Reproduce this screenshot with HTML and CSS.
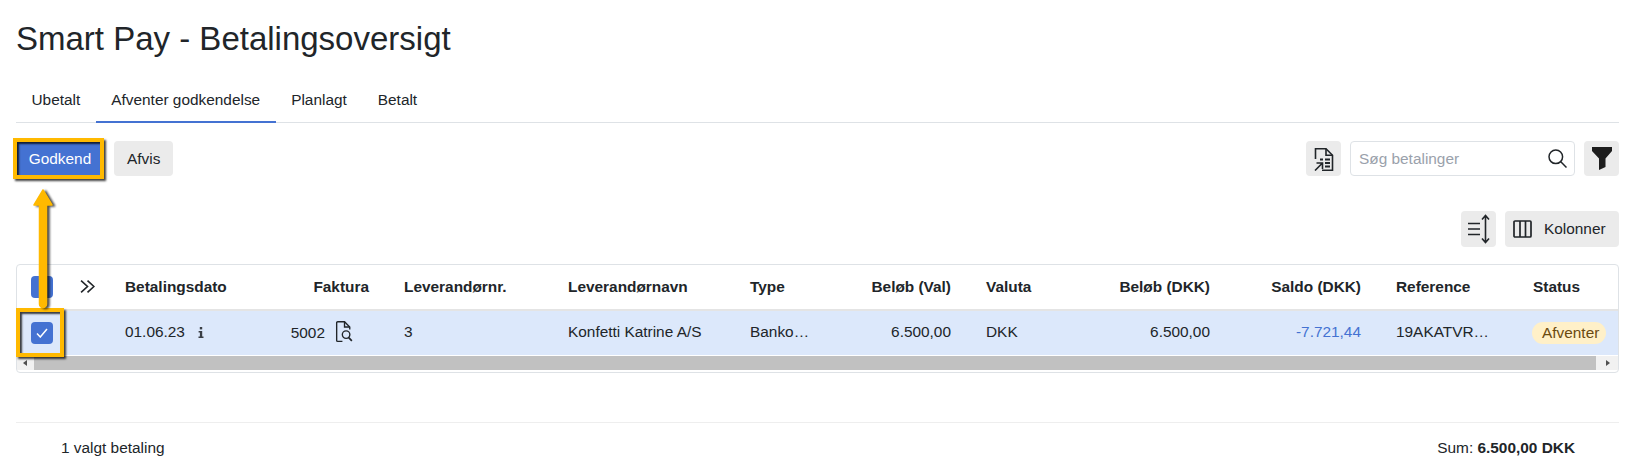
FILE: index.html
```html
<!DOCTYPE html>
<html lang="da">
<head>
<meta charset="utf-8">
<title>Smart Pay - Betalingsoversigt</title>
<link rel="stylesheet" href="styles.css">
</head>
<body>
<main class="page">
  <h1 class="title">Smart Pay - Betalingsoversigt</h1>
  <nav class="tabs">
    <a class="tab">Ubetalt</a>
    <a class="tab active">Afventer godkendelse</a>
    <a class="tab">Planlagt</a>
    <a class="tab">Betalt</a>
  </nav>
  <div class="toolbar">
    <div class="group">
      <button class="btn primary">Godkend</button>
      <button class="btn">Afvis</button>
    </div>
    <div class="group right">
      <button class="btn icon" aria-label="Eksport">
        <svg width="20" height="24" viewBox="0 0 20 24" fill="none" stroke="#212529" stroke-width="1.600"><path d="M1.500 12V1.800h10.500l6.500 6.500V23.200H8"/><path d="M12 1.800V8.300h6.500"/><path d="M1 23.500L8 16.500M2.500 16h6v6"/><path d="M11 12.500h5M11 16h5M11 19.500h5" stroke-width="2"/><path d="M6 12.500h3" stroke-width="2"/></svg>
      </button>
      <label class="search">
        <span class="placeholder">Søg betalinger</span>
        <svg width="19" height="19" viewBox="0 0 19 19" fill="none" stroke="#212529" stroke-width="1.500"><circle cx="7.800" cy="7.800" r="6.800"/><path d="M12.800 12.800L18.500 18.500"/></svg>
      </label>
      <button class="btn icon" aria-label="Filter">
        <svg width="20" height="23" viewBox="0 0 20 23" fill="#1d1d1d"><path d="M0 0h20v4l-6.500 7.500V20L7 23V11.500L0 4z"/></svg>
      </button>
    </div>
  </div>
  <div class="toolbar second">
    <button class="btn icon tall" aria-label="Tæthed">
      <svg width="23" height="30" viewBox="0 0 23 30" fill="none" stroke="#212529" stroke-width="1.600"><path d="M1 9.500h12M1 15h12M1 20.500h12"/><path d="M18.500 2v26M15 5.500L18.500 1.500 22 5.500M15 24.500l3.500 4 3.500-4"/></svg>
    </button>
    <button class="btn tall columns">
      <svg width="19" height="18" viewBox="0 0 19 18" fill="none" stroke="#212529" stroke-width="1.700"><rect x="1" y="1" width="17" height="16" rx="1"/><path d="M7 1v16M12.500 1v16"/></svg>
      <span>Kolonner</span>
    </button>
  </div>
  <section class="grid">
    <table class="data">
      <colgroup>
        <col class="c-check"><col class="c-exp"><col class="c-date"><col class="c-inv"><col class="c-nr"><col class="c-name"><col class="c-type"><col class="c-val"><col class="c-cur"><col class="c-dkk"><col class="c-bal"><col class="c-ref"><col class="c-status">
      </colgroup>
      <thead>
        <tr>
          <th><span class="check"></span></th>
          <th class="expand"><svg width="15" height="15" viewBox="0 0 14 14" fill="none" stroke="#212529" stroke-width="1.500"><path d="M1 1.500L7 7l-6 5.500M7 1.500L13 7l-6 5.500"/></svg></th>
          <th>Betalingsdato</th>
          <th class="num">Faktura</th>
          <th>Leverandørnr.</th>
          <th>Leverandørnavn</th>
          <th>Type</th>
          <th class="num">Beløb (Val)</th>
          <th>Valuta</th>
          <th class="num">Beløb (DKK)</th>
          <th class="num">Saldo (DKK)</th>
          <th>Reference</th>
          <th>Status</th>
        </tr>
      </thead>
      <tbody>
        <tr>
          <td class="cell-check"><span class="check"><svg width="12" height="10" viewBox="0 0 12 10" fill="none" stroke="#fff" stroke-width="1.500"><path d="M1 5.500L4.300 9 11 1"/></svg></span></td>
          <td></td>
          <td><span class="date">01.06.23</span><svg class="info" width="6" height="11" viewBox="0 0 6 11" fill="#3a3f45"><rect x="1.800" y="0" width="2.400" height="2.400"/><path d="M.6 4h3.600v5.500H5.500V11H.5V9.500h1.400V5.500H.6z"/></svg></td>
          <td class="num invoice"><span>5002</span><svg width="18" height="22" viewBox="0 0 17 21" fill="none" stroke="#212529" stroke-width="1.300"><path d="M7 19.500H2.500a1 1 0 0 1-1-1V1.700a1 1 0 0 1 1-1h6.500l5 5V8"/><path d="M9 .7v5h5"/><circle cx="10.500" cy="13" r="3.600"/><path d="M13 15.800l3 3.200" stroke-width="1.600"/></svg></td>
          <td>3</td>
          <td>Konfetti Katrine A/S</td>
          <td>Banko…</td>
          <td class="num">6.500,00</td>
          <td>DKK</td>
          <td class="num">6.500,00</td>
          <td class="num balance">-7.721,44</td>
          <td>19AKATVR…</td>
          <td class="status"><span class="pill">Afventer</span></td>
        </tr>
      </tbody>
    </table>
    <div class="scrollbar">
      <span class="arrow left"></span>
      <span class="thumb"></span>
      <span class="arrow rightward"></span>
    </div>
  </section>
  <footer class="foot">
    <span>1 valgt betaling</span>
    <span>Sum: <strong>6.500,00 DKK</strong></span>
  </footer>
</main>
<div class="mark mark-btn"></div>
<div class="mark mark-check"></div>
<svg class="pointer" width="30" height="124" viewBox="0 0 30 124">
  <path class="pointer-shadow" d="M11 1L2 16h5.500v99a3.500 3.500 0 0 0 7 0V16H20z"/>
  <path class="pointer-fill" d="M11 1L2 16h5.500v99a3.500 3.500 0 0 0 7 0V16H20z"/>
</svg>
</body>
</html>
```
FILE: styles.css
```css
* { box-sizing: border-box; }
html, body { margin: 0; padding: 0; }
body {
  position: relative;
  width: 1635px;
  height: 476px;
  overflow: hidden;
  background: #fff;
  color: #212529;
  font-family: "Liberation Sans", Arial, sans-serif;
  font-size: 15.4px;
}
.page { padding: 20px 16px 0; }
.title {
  margin: 0;
  height: 38px;
  font-size: 33px;
  line-height: 38px;
  font-weight: 400;
}
.tabs {
  display: flex;
  margin-top: 21px;
  height: 44px;
  border-bottom: 1px solid #dee2e6;
}
.tab {
  padding: 0 15.500px;
  height: 44px;
  line-height: 41px;
}
.tab.active { border-bottom: 2px solid #4472d2; }
.toolbar {
  display: flex;
  justify-content: space-between;
  margin-top: 18px;
}
.group { display: flex; gap: 10px; }
.group.right { gap: 9px; }
.btn {
  height: 35px;
  padding: 0 13px;
  border: 0;
  border-radius: 4px;
  background: #ebebeb;
  color: #212529;
  font: 15.4px "Liberation Sans", Arial, sans-serif;
}
.btn.primary { width: 88px; padding: 0; background: #4472d2; color: #fff; }
.btn.icon {
  display: flex;
  align-items: center;
  justify-content: center;
  width: 35px;
  padding: 0;
}
.search {
  display: flex;
  align-items: center;
  justify-content: space-between;
  width: 225px;
  height: 35px;
  padding: 0 7px 0 8px;
  border: 1px solid #dee2e6;
  border-radius: 4px;
}
.placeholder { color: #9aa1ab; }
.second { justify-content: flex-end; gap: 9px; margin-top: 35px; }
.btn.tall { height: 36px; }
.columns {
  display: flex;
  align-items: center;
  gap: 12px;
  width: 114px;
  padding: 0 0 0 8px;
}
.grid {
  margin-top: 17px;
  width: 1603px;
  height: 109px;
  border: 1px solid #dee2e6;
  border-radius: 4px;
}
.data {
  width: 1601px;
  table-layout: fixed;
  border-collapse: collapse;
}
.c-check { width: 50px; }
.c-exp { width: 42px; }
.c-date { width: 164px; }
.c-inv { width: 115px; }
.c-nr { width: 164px; }
.c-name { width: 182px; }
.c-type { width: 91px; }
.c-val { width: 145px; }
.c-cur { width: 76px; }
.c-dkk { width: 183px; }
.c-bal { width: 151px; }
.c-ref { width: 137px; }
.c-status { width: 101px; }
th, td {
  padding: 0 16px;
  text-align: left;
  white-space: nowrap;
  overflow: hidden;
}
th {
  height: 45px;
  font-weight: 700;
  border-bottom: 2px solid #e4e4e4;
}
td {
  height: 45px;
  padding-bottom: 2px;
  background: #dce8fb;
}
th:first-child, td.cell-check { padding: 0 0 0 14px; }
th.expand { padding: 3px 0 0 13px; }
th.num, td.num { text-align: right; padding-right: 19px; }
.check {
  display: flex;
  align-items: center;
  justify-content: center;
  width: 22px;
  height: 22px;
  border-radius: 4px;
  background: #4472d2;
}
.date { margin-right: 13px; }
.info { vertical-align: -1px; }
td.invoice { padding: 0 35px 2px 0; }
.invoice span { margin-right: 10px; }
.invoice svg { vertical-align: -5px; }
td.balance { color: #4472d2; }
td.status { padding: 0 0 0 15px; overflow: visible; }
.pill {
  display: inline-block;
  width: 74px;
  height: 22px;
  line-height: 22px;
  padding-left: 10px;
  border-radius: 11px;
  background: #fff0c8;
  color: #6b4a10;
}
.scrollbar {
  display: flex;
  height: 14px;
  background: #f1f1f1;
  margin-top: 1px;
}
.arrow {
  position: relative;
  flex: none;
  width: 17px;
}
.arrow::after {
  content: "";
  position: absolute;
  top: 4px;
  border-style: solid;
  border-width: 3px 4px;
  border-color: transparent;
}
.arrow.left::after { left: 2px; border-right-color: #505050; }
.arrow.rightward { width: 22px; }
.arrow.rightward::after { left: 10px; border-left-color: #505050; }
.thumb { flex: 1; background: #c1c1c1; }
.foot {
  display: flex;
  justify-content: space-between;
  margin-top: 49px;
  height: 52px;
  padding: 0 44px 0 45px;
  border-top: 1px solid #eeeeee;
  line-height: 50px;
}
.mark {
  position: absolute;
  border: 4px solid #ffb900;
  box-shadow: 2px 2px 2px rgba(0, 0, 0, .75), inset 2px 2px 2px rgba(0, 0, 0, .75);
}
.mark-btn { left: 13px; top: 138px; width: 91px; height: 41px; }
.mark-check { left: 16px; top: 308px; width: 48px; height: 49px; }
.pointer { position: absolute; left: 32px; top: 189px; overflow: visible; }
.pointer path { stroke-linejoin: round; }
.pointer-shadow { fill: #000; stroke: #000; stroke-width: 1.500px; opacity: .7; transform: translate(2.500px, 1px); filter: blur(1px); }
.pointer-fill { fill: #ffb900; stroke: #ffb900; stroke-width: 1.500px; }
```
